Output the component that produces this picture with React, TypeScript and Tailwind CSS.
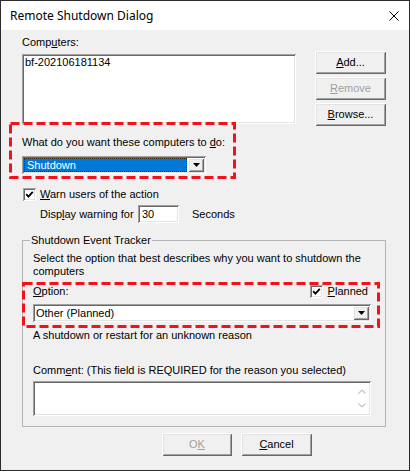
const sunken =
  'bg-white shadow-[inset_1px_1px_0_#a0a0a0,inset_-1px_-1px_0_#ffffff,inset_2px_2px_0_#696969,inset_-2px_-2px_0_#e3e3e3]';
const raised =
  'bg-[#f0f0f0] shadow-[inset_1px_1px_0_#ffffff,inset_-1px_-1px_0_#696969,inset_2px_2px_0_#e3e3e3,inset_-2px_-2px_0_#a0a0a0]';

function Btn({ children, disabled, w }: { children: React.ReactNode; disabled?: boolean; w: string }) {
  return (
    <div
      className={`${raised} ${w} h-[23px] flex items-center justify-center ${
        disabled ? 'text-[#a0a0a0]' : 'text-black'
      }`}
    >
      {children}
    </div>
  );
}

function Check() {
  return (
    <div className={`${sunken} w-[13px] h-[13px] shrink-0`}>
      <svg width="13" height="13" viewBox="0 0 13 13">
        <path d="M3.2 6.2 L5.4 8.6 L9.8 3.8" fill="none" stroke="#000" strokeWidth="1.8" />
      </svg>
    </div>
  );
}

function DropButton() {
  return (
    <div className={`${raised} w-[16px] h-[14px] flex items-center justify-center shrink-0`}>
      <svg width="7" height="4" viewBox="0 0 7 4">
        <path d="M0 0 H7 L3.5 4 Z" fill="#000" />
      </svg>
    </div>
  );
}

function Dashed({ left, top, w, h }: { left: string; top: string; w: number; h: number }) {
  return (
    <svg className={`absolute ${left} ${top}`} width={w} height={h}>
      <rect
        x="1.5"
        y="1.5"
        width={w - 3}
        height={h - 3}
        fill="none"
        stroke="#f2121b"
        strokeWidth="3"
        strokeDasharray="9 4"
      />
    </svg>
  );
}

export default function App() {
  return (
    <div className="relative w-[410px] h-[471px] border border-[#2b2b2b] bg-[#f0f0f0] text-[11px] leading-[13px] text-black overflow-hidden font-['Liberation_Sans',Arial,sans-serif]">
      {/* title bar */}
      <div className="h-[29px] bg-white flex items-center justify-between pl-[9px] pr-[10px]">
        <span className="text-[12px] font-['Noto_Sans','Liberation_Sans',sans-serif]">Remote Shutdown Dialog</span>
        <svg width="10" height="10" viewBox="0 0 10 10">
          <path d="M0.5 0.5 L9.5 9.5 M9.5 0.5 L0.5 9.5" stroke="#000" strokeWidth="1" />
        </svg>
      </div>

      <div className="px-[21px] pt-[6px]">
        {/* computers list + buttons */}
        <div className="flex">
          <div className="w-[274px]">
            <div className="h-[13px]">
              Comp<u>u</u>ters:
            </div>
            <div className={`${sunken} mt-[5px] h-[70px] pl-[3px] pt-[2px]`}>bf-202106181134</div>
          </div>
          <div className="ml-[19px] mt-[15px] flex flex-col gap-[3px]">
            <Btn w="w-[71px]">
              <u>A</u>dd...
            </Btn>
            <Btn w="w-[71px]" disabled>
              <u>R</u>emove
            </Btn>
            <Btn w="w-[71px]">
              <u>B</u>rowse...
            </Btn>
          </div>
        </div>

        {/* action */}
        <div className="mt-[10px] h-[13px]">
          What do you want these computers to <u>d</u>o:
        </div>
        <div className={`${sunken} mt-[7px] w-[184px] h-[18px] p-[2px] flex`}>
          <div className="flex-1 mr-[1px] bg-[#0078d7] text-white border border-dotted border-[#3a2a10] pl-[2px] leading-[12px]">
            Shutdown
          </div>
          <DropButton />
        </div>

        <div className="mt-[14px] h-[13px] flex items-center pl-[1px]">
          <Check />
          <span className="ml-[4px]">
            <u>W</u>arn users of the action
          </span>
        </div>

        <div className="mt-[4px] h-[18px] flex items-center pl-[18px]">
          <span className="w-[98px]">
            Disp<u>l</u>ay warning for
          </span>
          <div className={`${sunken} w-[41px] h-[18px] pl-[4px] flex items-center`}>30</div>
          <span className="ml-[13px]">Seconds</span>
        </div>

        {/* event tracker */}
        <fieldset className="mt-[11px] w-[364px] border border-[#b4b4b4] pl-[10px] pr-[14px] pt-[5px] pb-[10px]">
          <legend className="ml-[-3px] px-[1px]">Shutdown Event Tracker</legend>
          <p>
            Select the option that best describes why you want to shutdown the
            <br />
            computers
          </p>
          <div className="mt-[6px] h-[14px] flex items-center justify-between">
            <span className="pt-[1px]">
              <u>O</u>ption:
            </span>
            <div className="flex items-center pr-[3px]">
              <Check />
              <span className="ml-[5px]">
                <u>P</u>lanned
              </span>
            </div>
          </div>
          <div className={`${sunken} mt-[6px] h-[18px] p-[2px] flex`}>
            <div className="flex-1 pl-[1px] leading-[14px]">Other (Planned)</div>
            <DropButton />
          </div>
          <div className="mt-[7px] h-[13px]">A shutdown or restart for an unknown reason</div>
          <div className="mt-[22px] h-[13px]">
            Comm<u>e</u>nt: (This field is REQUIRED for the reason you selected)
          </div>
          <div className={`${sunken} mt-[4px] h-[35px] flex justify-end pr-[5px] pt-[8px]`}>
            <div className="flex flex-col items-center gap-[9px]">
              <svg width="8" height="5" viewBox="0 0 8 5">
                <path d="M0.5 4.5 L4 1 L7.5 4.5" fill="none" stroke="#c4c4c4" strokeWidth="1.2" />
              </svg>
              <svg width="8" height="5" viewBox="0 0 8 5">
                <path d="M0.5 0.5 L4 4 L7.5 0.5" fill="none" stroke="#c4c4c4" strokeWidth="1.2" />
              </svg>
            </div>
          </div>
        </fieldset>

        <div className="mt-[6px] ml-[140px] flex gap-[9px]">
          <Btn w="w-[70px]" disabled>
            O<u>K</u>
          </Btn>
          <Btn w="w-[71px]">
            <u>C</u>ancel
          </Btn>
        </div>
      </div>

      {/* annotation overlays */}
      <Dashed left="left-[8px]" top="top-[121px]" w={227} h={57} />
      <Dashed left="left-[21px]" top="top-[281px]" w={358} h={46} />
    </div>
  );
}
